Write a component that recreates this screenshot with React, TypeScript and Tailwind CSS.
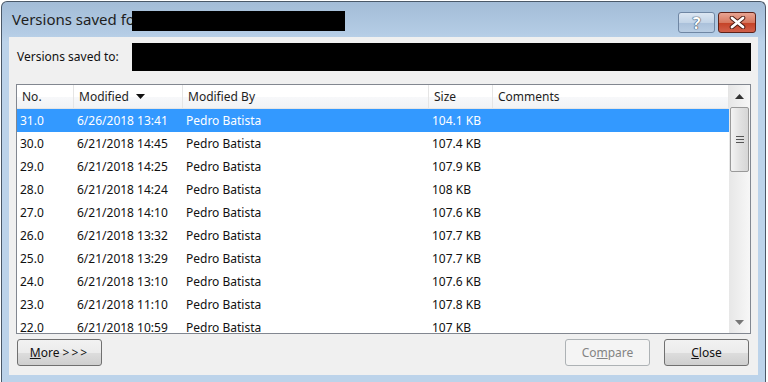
import React from 'react'

const rows = [
  { no: '31.0', modified: '6/26/2018 13:41', size: '104.1 KB' },
  { no: '30.0', modified: '6/21/2018 14:45', size: '107.4 KB' },
  { no: '29.0', modified: '6/21/2018 14:25', size: '107.9 KB' },
  { no: '28.0', modified: '6/21/2018 14:24', size: '108 KB' },
  { no: '27.0', modified: '6/21/2018 14:10', size: '107.6 KB' },
  { no: '26.0', modified: '6/21/2018 13:32', size: '107.7 KB' },
  { no: '25.0', modified: '6/21/2018 13:29', size: '107.7 KB' },
  { no: '24.0', modified: '6/21/2018 13:10', size: '107.6 KB' },
  { no: '23.0', modified: '6/21/2018 11:10', size: '107.8 KB' },
  { no: '22.0', modified: '6/21/2018 10:59', size: '107 KB' },
]

const cols = ['w-[57px]', 'w-[109px]', 'w-[246px]', 'w-[64px]', 'flex-1']

function WinButton({ children, disabled = false, className = '' }: { children: React.ReactNode; disabled?: boolean; className?: string }) {
  return (
    <button
      disabled={disabled}
      className={
        'h-[27px] w-[85px] rounded-[3px] border text-[12px] leading-none flex items-center justify-center ' +
        (disabled
          ? 'border-[#adb2b5] bg-[#f4f4f4] text-[#838383] '
          : 'border-[#707070] bg-[linear-gradient(#f2f2f2_0%,#ebebeb_50%,#dddddd_51%,#cfcfcf_100%)] text-[#111] ') +
        className
      }
    >
      {children}
    </button>
  )
}

export default function App() {
  return (
    <div className="w-[768px] h-[382px] bg-white overflow-hidden" style={{ fontFamily: '"Noto Sans", "Open Sans", sans-serif' }}>
      <div className="ml-[1px] mt-[1px] w-[765px] h-[381px] rounded-t-[6px] border border-b-0 border-[#4a5868] bg-[linear-gradient(#a3bcd7_0px,#b3cbe4_30px,#bcd3ea_40px,#bcd3ea_100%)] flex flex-col">
        {/* title bar */}
        <div className="h-[35px] shrink-0 flex items-start relative">
          <div className="pl-[10px] pt-[7px] text-[15px] text-[#1e1e1e] leading-[20px] flex items-center">
            <span>Versions saved for</span>
          </div>
          <div className="absolute left-[130px] top-[9px] w-[213px] h-[20px] bg-black" />
          <div className="ml-auto mt-[10px] mr-[9px] flex gap-[3px]">
            <div className="w-[37px] h-[21px] rounded-[3px] border border-[#6f86a3] bg-[linear-gradient(#dbe6f2_0%,#c3d4e7_50%,#aac0da_51%,#b9cde3_100%)] flex items-center justify-center">
              <span className="text-[16px] font-bold text-white leading-none" style={{ textShadow: '0 0 1px #3a4a5e, 0 0 1px #3a4a5e, 0 0 1px #3a4a5e' }}>?</span>
            </div>
            <div className="w-[38px] h-[21px] rounded-[3px] border border-[#5d2219] bg-[linear-gradient(#e8a493_0%,#d7785f_50%,#c44125_51%,#d1604a_100%)] flex items-center justify-center">
              <svg width="17" height="13" viewBox="0 0 17 13">
                <path d="M3 2 L14 11 M14 2 L3 11" stroke="#4a1a12" strokeWidth="4.6" strokeLinecap="round" />
                <path d="M3 2 L14 11 M14 2 L3 11" stroke="#ffffff" strokeWidth="2.8" strokeLinecap="round" />
              </svg>
            </div>
          </div>
        </div>

        {/* client area */}
        <div className="mx-[7px] h-[338px] shrink-0 bg-[#f0f0f0] flex flex-col px-[7px] text-[12px] text-[#111]">
          <div className="flex items-center mt-[6px] h-[28px] shrink-0">
            <span className="pl-[1px] w-[116px]">Versions saved to:</span>
            <div className="flex-1 h-[28px] bg-black" />
          </div>

          {/* list view */}
          <div className="mt-[13px] h-[250px] shrink-0 border border-[#828790] bg-white flex overflow-hidden">
            <div className="flex-1 flex flex-col overflow-hidden">
              <div className="h-[24px] shrink-0 flex border-b border-[#e5e5e5] bg-[linear-gradient(#ffffff_0%,#ffffff_50%,#f7f8fa_51%,#f2f3f5_100%)]">
                {['No.', 'Modified', 'Modified By', 'Size', 'Comments'].map((h, i) => (
                  <div key={h} className={cols[i] + ' flex items-center pl-[5px] border-r border-[#e5e5e5] text-[#1e1e1e]'}>
                    {h}
                    {i === 1 && (
                      <svg width="9" height="5" viewBox="0 0 9 5" className="ml-[7px]">
                        <path d="M0 0 H9 L4.5 5 Z" fill="#111" />
                      </svg>
                    )}
                  </div>
                ))}
              </div>
              {rows.map((r, idx) => (
                <div key={r.no} className={'h-[23px] shrink-0 flex items-center ' + (idx === 0 ? 'bg-[#3399ff] text-white' : 'text-[#111]')}>
                  <div className={cols[0] + ' pl-[3px]'}>{r.no}</div>
                  <div className={cols[1] + ' pl-[3px]'}>{r.modified}</div>
                  <div className={cols[2] + ' pl-[3px]'}>Pedro Batista</div>
                  <div className={cols[3] + ' pl-[3px]'}>{r.size}</div>
                  <div className={cols[4]} />
                </div>
              ))}
            </div>

            {/* scrollbar */}
            <div className="w-[21px] shrink-0 bg-[linear-gradient(90deg,#e7e7e7,#f7f7f7)] flex flex-col items-center">
              <div className="h-[22px] flex items-center justify-center">
                <svg width="9" height="5" viewBox="0 0 9 5"><path d="M4.5 0 L9 5 H0 Z" fill="#333" /></svg>
              </div>
              <div className="w-[19px] h-[65px] rounded-[2px] border border-[#999] bg-[linear-gradient(90deg,#f3f3f3,#e2e2e2_50%,#d6d6d6)] flex flex-col items-center justify-center gap-[2px]">
                <div className="w-[8px] h-[1px] bg-[#555]" />
                <div className="w-[8px] h-[1px] bg-[#555]" />
                <div className="w-[8px] h-[1px] bg-[#555]" />
              </div>
              <div className="flex-1" />
              <div className="h-[22px] flex items-center justify-center">
                <svg width="9" height="5" viewBox="0 0 9 5"><path d="M0 0 H9 L4.5 5 Z" fill="#777" /></svg>
              </div>
            </div>
          </div>

          {/* buttons */}
          <div className="mt-[5px] flex items-center pl-[1px] pr-[2px]">
            <WinButton>
              <span><span className="underline">M</span>ore <span className="tracking-[2px]">&gt;&gt;&gt;</span></span>
            </WinButton>
            <WinButton disabled className="ml-auto">
              <span>Co<span className="underline">m</span>pare</span>
            </WinButton>
            <WinButton className="ml-[14px]">
              <span><span className="underline">C</span>lose</span>
            </WinButton>
          </div>
        </div>
      </div>
    </div>
  )
}
